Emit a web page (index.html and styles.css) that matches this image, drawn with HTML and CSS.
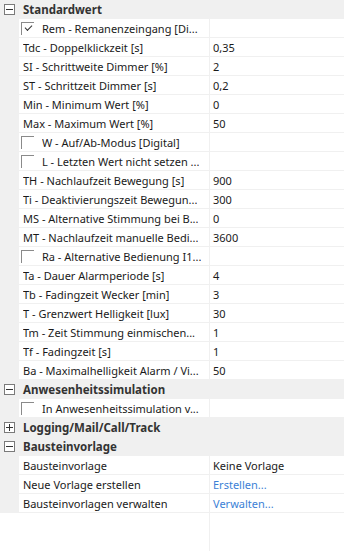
FILE: index.html
```html
<!DOCTYPE html>
<html lang="de">
<head>
    <meta charset="UTF-8">
    <meta name="viewport" content="width=device-width, initial-scale=1.0">
    <title>Eigenschaften</title>
    <link rel="stylesheet" href="styles.css">
</head>

<body>
    <div class="grid">
        <!-- Standardwert -->
        <div class="row group">
            <span class="toggle minus"></span>
            <span class="group-name">Standardwert</span>
        </div>
        <div class="row">
            <div class="name check-name"><span class="checkbox checked"></span><span class="text">Rem - Remanenzeingang [Di...</span></div>
            <div class="value"></div>
        </div>
        <div class="row">
            <div class="name"><span class="text">Tdc - Doppelklickzeit [s]</span></div>
            <div class="value">0,35</div>
        </div>
        <div class="row">
            <div class="name"><span class="text">SI - Schrittweite Dimmer [%]</span></div>
            <div class="value">2</div>
        </div>
        <div class="row">
            <div class="name"><span class="text">ST - Schrittzeit Dimmer [s]</span></div>
            <div class="value">0,2</div>
        </div>
        <div class="row">
            <div class="name"><span class="text">Min - Minimum Wert [%]</span></div>
            <div class="value">0</div>
        </div>
        <div class="row">
            <div class="name"><span class="text">Max - Maximum Wert [%]</span></div>
            <div class="value">50</div>
        </div>
        <div class="row">
            <div class="name check-name"><span class="checkbox"></span><span class="text">W - Auf/Ab-Modus [Digital]</span></div>
            <div class="value"></div>
        </div>
        <div class="row">
            <div class="name check-name"><span class="checkbox"></span><span class="text">L - Letzten Wert nicht setzen ...</span></div>
            <div class="value"></div>
        </div>
        <div class="row">
            <div class="name"><span class="text">TH - Nachlaufzeit Bewegung [s]</span></div>
            <div class="value">900</div>
        </div>
        <div class="row">
            <div class="name"><span class="text">Ti - Deaktivierungszeit Bewegun...</span></div>
            <div class="value">300</div>
        </div>
        <div class="row">
            <div class="name"><span class="text">MS - Alternative Stimmung bei B...</span></div>
            <div class="value">0</div>
        </div>
        <div class="row">
            <div class="name"><span class="text">MT - Nachlaufzeit manuelle Bedi...</span></div>
            <div class="value">3600</div>
        </div>
        <div class="row">
            <div class="name check-name"><span class="checkbox"></span><span class="text">Ra - Alternative Bedienung I1...</span></div>
            <div class="value"></div>
        </div>
        <div class="row">
            <div class="name"><span class="text">Ta - Dauer Alarmperiode [s]</span></div>
            <div class="value">4</div>
        </div>
        <div class="row">
            <div class="name"><span class="text">Tb - Fadingzeit Wecker [min]</span></div>
            <div class="value">3</div>
        </div>
        <div class="row">
            <div class="name"><span class="text">T - Grenzwert Helligkeit [lux]</span></div>
            <div class="value">30</div>
        </div>
        <div class="row">
            <div class="name"><span class="text">Tm - Zeit Stimmung einmischen...</span></div>
            <div class="value">1</div>
        </div>
        <div class="row">
            <div class="name"><span class="text">Tf - Fadingzeit [s]</span></div>
            <div class="value">1</div>
        </div>
        <div class="row">
            <div class="name"><span class="text">Ba - Maximalhelligkeit Alarm / Vi...</span></div>
            <div class="value">50</div>
        </div>

        <!-- Anwesenheitssimulation -->
        <div class="row group">
            <span class="toggle minus"></span>
            <span class="group-name">Anwesenheitssimulation</span>
        </div>
        <div class="row">
            <div class="name check-name"><span class="checkbox"></span><span class="text">In Anwesenheitssimulation v...</span></div>
            <div class="value"></div>
        </div>

        <!-- Logging -->
        <div class="row group">
            <span class="toggle plus"></span>
            <span class="group-name">Logging/Mail/Call/Track</span>
        </div>

        <!-- Bausteinvorlage -->
        <div class="row group">
            <span class="toggle minus"></span>
            <span class="group-name">Bausteinvorlage</span>
        </div>
        <div class="row">
            <div class="name"><span class="text">Bausteinvorlage</span></div>
            <div class="value">Keine Vorlage</div>
        </div>
        <div class="row">
            <div class="name"><span class="text">Neue Vorlage erstellen</span></div>
            <div class="value"><a href="#">Erstellen...</a></div>
        </div>
        <div class="row">
            <div class="name"><span class="text">Bausteinvorlagen verwalten</span></div>
            <div class="value"><a href="#">Verwalten...</a></div>
        </div>

        <div class="filler">
            <div class="filler-name"></div>
            <div class="filler-value"></div>
        </div>
    </div>
</body>
</html>
```

FILE: styles.css
```css
html, body {
    height: 100%;
}

body {
    margin: 0;
    padding: 0;
    background-color: #fff;
    font-family: "Noto Sans", "Open Sans", sans-serif;
    font-size: 11px;
    color: #1a1a1a;
}

.grid {
    display: flex;
    flex-direction: column;
    height: 100%;
}

.row {
    display: flex;
    box-sizing: border-box;
    height: 19px;
    padding-top: 2px;
    border-bottom: 1px solid #f0f0f0;
    background-color: #f0f0f0;
    line-height: 16px;
    flex-shrink: 0;
}

.group {
    align-items: center;
    padding-top: 0;
}

.group-name {
    margin-left: 8px;
    padding-top: 2px;
    font-size: 11.5px;
    font-weight: bold;
    color: #333;
}

.toggle {
    position: relative;
    box-sizing: border-box;
    width: 11px;
    height: 11px;
    margin-left: 4px;
    border: 1px solid #7a7a7a;
    background-color: #fff;
}

.toggle::before {
    content: "";
    position: absolute;
    left: 1px;
    top: 4px;
    width: 7px;
    height: 1px;
    background-color: #333;
}

.plus::after {
    content: "";
    position: absolute;
    left: 4px;
    top: 1px;
    width: 1px;
    height: 7px;
    background-color: #333;
}

.name {
    display: flex;
    align-items: center;
    width: 186px;
    margin-top: -2px;
    padding-top: 2px;
    margin-left: 19px;
    padding-left: 4px;
    background-color: #fff;
    overflow: hidden;
    white-space: nowrap;
}

.check-name {
    padding-left: 2px;
    width: 188px;
}

.text {
    overflow: hidden;
    text-overflow: ellipsis;
}

.checkbox {
    position: relative;
    box-sizing: border-box;
    width: 13px;
    height: 13px;
    margin-top: -2px;
    margin-right: 8px;
    flex-shrink: 0;
    border-left: 1px solid #8a8a8a;
    border-top: 1px solid #8a8a8a;
}

.checked::after {
    content: "";
    position: absolute;
    left: 3px;
    top: 2px;
    width: 6px;
    height: 3px;
    border-left: 1px solid #333;
    border-bottom: 1px solid #333;
    transform: rotate(-45deg);
}

.value {
    flex: 1;
    margin-top: -2px;
    padding-top: 2px;
    border-left: 1px solid #f0f0f0;
    padding-left: 3px;
    background-color: #fff;
    white-space: nowrap;
    overflow: hidden;
}

.value a {
    color: #3c7fd6;
    text-decoration: none;
}

.filler {
    display: flex;
    flex: 1;
}

.filler-name {
    width: 209px;
}

.filler-value {
    flex: 1;
    border-left: 1px solid #f0f0f0;
}
```
